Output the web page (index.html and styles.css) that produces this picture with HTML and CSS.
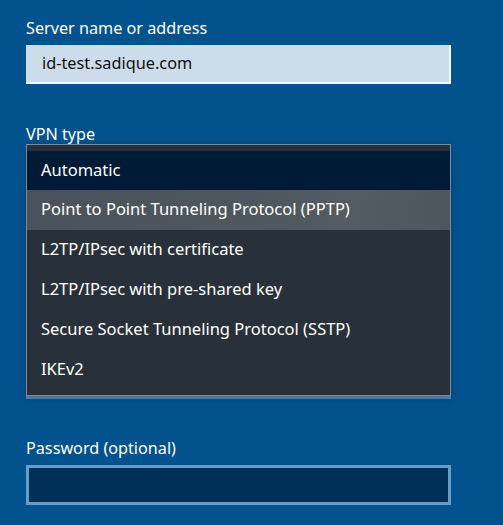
FILE: index.html
```html
<!DOCTYPE html>
<html>
<head>
<meta charset="utf-8">
<link rel="stylesheet" href="styles.css">
</head>
<body>
<div class="form">
  <div class="label label-server">Server name or address</div>
  <div class="input input-light">id-test.sadique.com</div>

  <div class="label label-vpn">VPN type</div>
  <div class="combo-area">
    <div class="field-under"></div>
    <div class="popup">
      <div class="option selected">Automatic</div>
      <div class="option hover">Point to Point Tunneling Protocol (PPTP)</div>
      <div class="option">L2TP/IPsec with certificate</div>
      <div class="option">L2TP/IPsec with pre-shared key</div>
      <div class="option">Secure Socket Tunneling Protocol (SSTP)</div>
      <div class="option">IKEv2</div>
    </div>
  </div>

  <div class="label label-pass">Password (optional)</div>
  <div class="input input-dark"></div>
</div>
</body>
</html>
```

FILE: styles.css
```css
html, body {
  margin: 0;
  padding: 0;
}
body {
  background: #02528e;
  width: 503px;
  height: 525px;
  overflow: hidden;
  font-family: "Noto Sans", "Open Sans", sans-serif;
  font-size: 16px;
  color: #ffffff;
}
.form {
  padding-left: 26px;
  width: 425px;
  display: flex;
  flex-direction: column;
}
.label {
  height: 20px;
  line-height: 20px;
  font-size: 16.2px;
}
.label-server { margin-top: 18px; margin-bottom: 7px; }
.label-vpn { margin-top: 40px; margin-bottom: 0; }
.label-pass { margin-top: 39px; margin-bottom: 7px; }

.input {
  box-sizing: border-box;
  height: 39px;
  line-height: 37px;
  padding-left: 16px;
  font-size: 16.3px;
}
.input-light {
  background: #cddcea;
  color: #111111;
  border-right: 2px solid #f2f6fa;
  border-bottom: 2px solid #f2f6fa;
}
.input-dark {
  height: 40px;
  background: #003058;
  border: 3px solid #6b9cc9;
}

.combo-area {
  position: relative;
  height: 255px;
  display: flex;
  flex-direction: column;
  justify-content: flex-end;
}
.field-under {
  box-sizing: border-box;
  height: 40px;
  background: #263039;
  border: 3px solid #5d89b3;
  border-top: none;
}
.popup {
  position: absolute;
  top: 0;
  left: 0;
  box-sizing: border-box;
  width: 425px;
  height: 252px;
  background: #283139;
  border: 1px solid #7d8a98;
  padding-top: 6px;
  box-shadow: 0 2px 6px rgba(0, 0, 0, 0.25);
}
.option {
  height: 40px;
  line-height: 38px;
  padding-left: 14px;
  font-size: 16.5px;
  color: #ffffff;
}
.option.selected {
  height: 39px;
  background: #001b35;
}
.option.hover {
  background: linear-gradient(100deg, #4a535b 0%, #4f585f 60%, #545c63 75%, #4d565d 100%);
}
```
